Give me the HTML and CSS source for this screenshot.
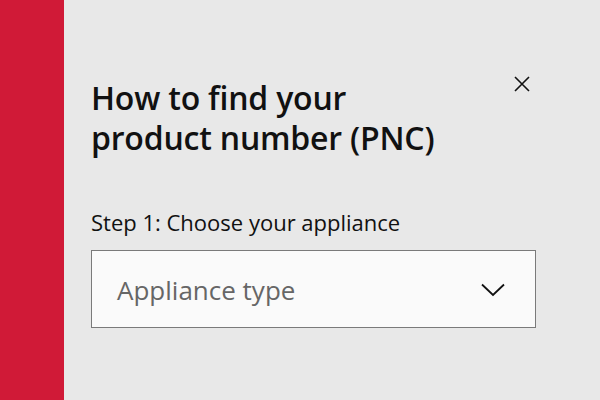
FILE: index.html
```html
<!DOCTYPE html>
<html>
<head>
<meta charset="utf-8">
<link rel="stylesheet" href="styles.css">
</head>
<body>
<div class="page">
  <div class="stripe"></div>
  <div class="panel">
    <div class="topbar">
      <button class="close" aria-label="Close">
        <svg width="16" height="16" viewBox="0 0 16 16"><path d="M1 1L15 15M15 1L1 15" stroke="#111" stroke-width="1.6" fill="none"/></svg>
      </button>
    </div>
    <h1 class="title">How to find your<br>product number (PNC)</h1>
    <div class="label">Step 1: Choose your appliance</div>
    <div class="select">
      <span class="placeholder">Appliance type</span>
      <svg class="chev" width="24" height="14" viewBox="0 0 24 14"><path d="M1 1.5L12 12L23 1.5" stroke="#111" stroke-width="1.8" fill="none"/></svg>
    </div>
  </div>
</div>
</body>
</html>
```
FILE: styles.css
```css
html, body { margin: 0; padding: 0; }
body { font-family: "Open Sans", "Noto Sans", sans-serif; color: #111; background: #e8e8e8; }
.page { display: flex; width: 600px; height: 400px; overflow: hidden; }
.stripe { width: 64px; flex: none; background: #d01a37; }
.panel { flex: 1; padding: 0 64px 0 27px; background: #e8e8e8; }
.topbar { display: flex; justify-content: flex-end; height: 0; padding-top: 76px; }
.close { border: 0; background: none; padding: 0; margin-right: 5px; width: 18px; height: 18px; cursor: pointer; }
.title { margin: 2px 0 0; font-size: 32px; font-weight: 600; line-height: 40px; letter-spacing: -0.2px; }
.label { margin-top: 50px; font-size: 22px; line-height: 28px; }
.select { margin-top: 14px; height: 76px; border: 1px solid #7a7a7a; background: #fafafa; display: flex; align-items: center; justify-content: space-between; padding: 0 30px 0 25px; }
.placeholder { font-size: 26px; color: #666; margin-top: 2px; }
.chev { display: block; margin-top: 2px; }
```
